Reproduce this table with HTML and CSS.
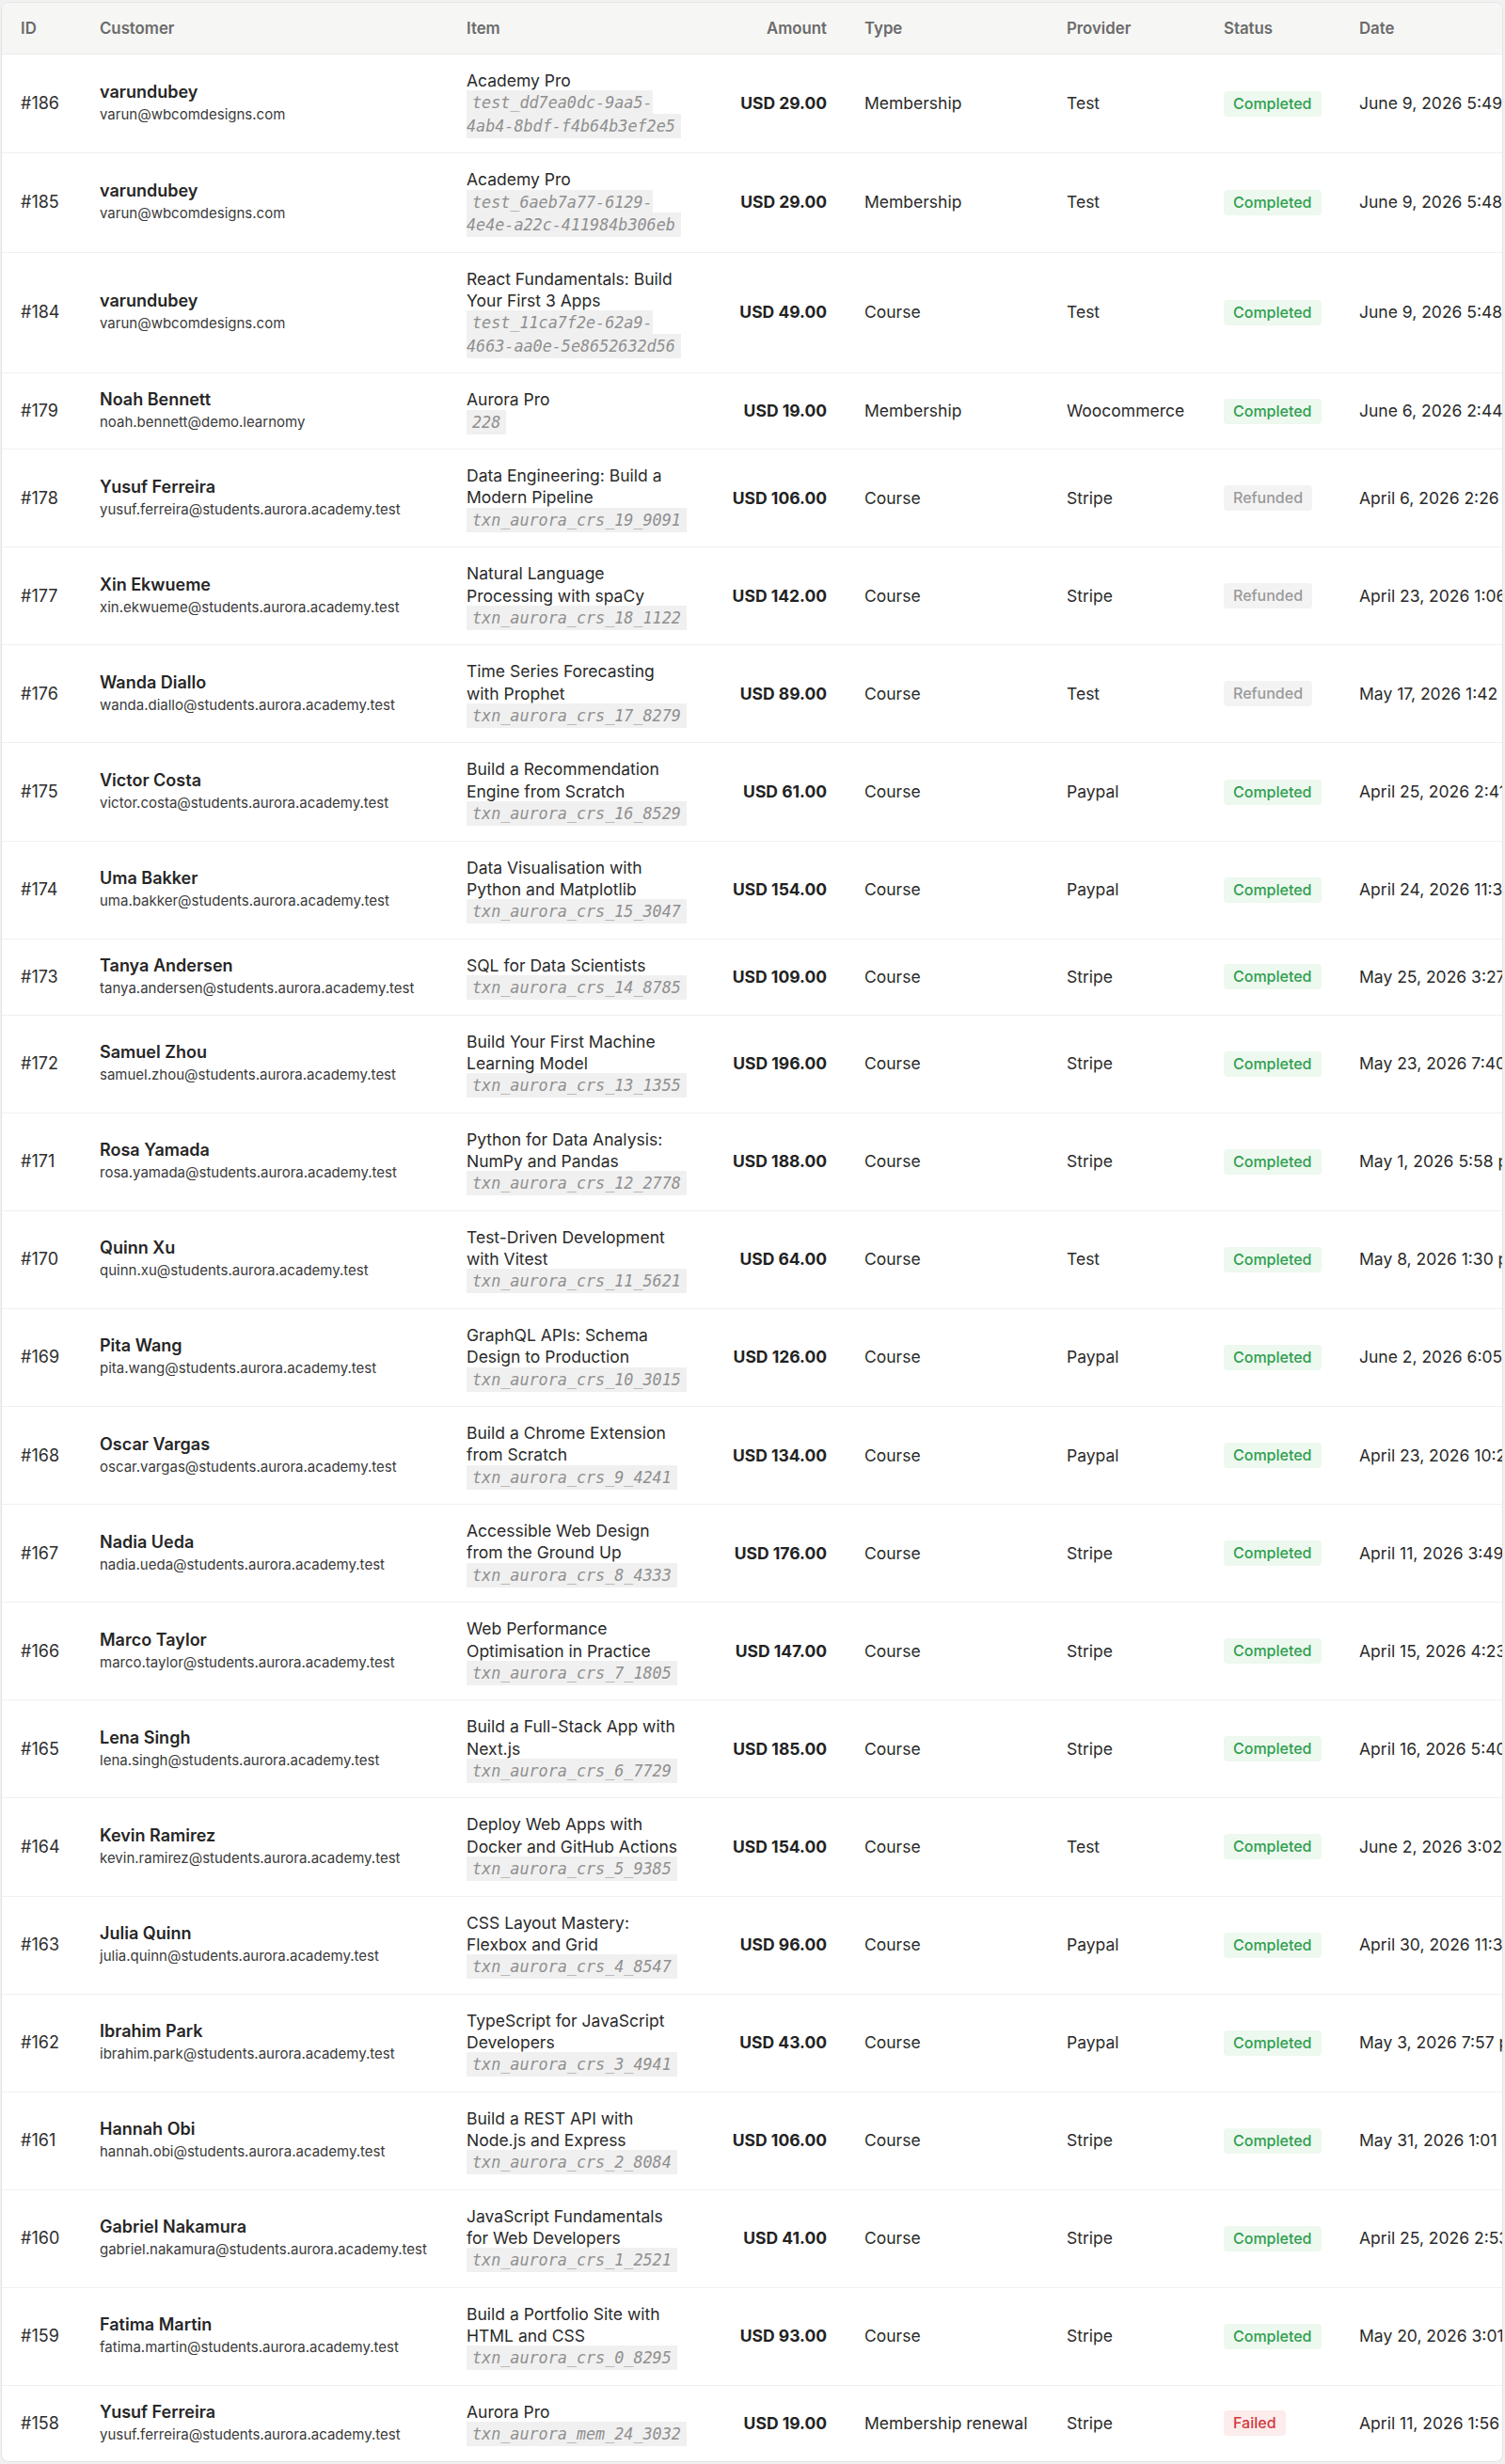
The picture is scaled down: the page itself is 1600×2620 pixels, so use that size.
FILE: index.html
```html
<!DOCTYPE html>
<html lang="en">
<head>
<meta charset="utf-8">
<title>Transactions</title>
<link rel="stylesheet" href="styles.css">
</head>
<body>
<div class="table-wrap">
<table class="tx">
<colgroup>
<col class="c-id"><col class="c-cust"><col class="c-item"><col class="c-amt"><col class="c-type"><col class="c-prov"><col class="c-status"><col class="c-date">
</colgroup>
<thead>
<tr><th>ID</th><th>Customer</th><th>Item</th><th class="num">Amount</th><th>Type</th><th>Provider</th><th>Status</th><th>Date</th></tr>
</thead>
<tbody>
<tr><td class="id">#186</td><td><div class="name">varundubey</div><div class="email">varun@wbcomdesigns.com</div></td><td><div class="item"><div class="title">Academy Pro</div><div class="ref"><code>test_dd7ea0dc-9aa5-4ab4-8bdf-f4b64b3ef2e5</code></div></div></td><td class="num amt">USD 29.00</td><td>Membership</td><td>Test</td><td><span class="badge ok">Completed</span></td><td class="date">June 9, 2026 5:49 pm</td></tr>
<tr><td class="id">#185</td><td><div class="name">varundubey</div><div class="email">varun@wbcomdesigns.com</div></td><td><div class="item"><div class="title">Academy Pro</div><div class="ref"><code>test_6aeb7a77-6129-4e4e-a22c-411984b306eb</code></div></div></td><td class="num amt">USD 29.00</td><td>Membership</td><td>Test</td><td><span class="badge ok">Completed</span></td><td class="date">June 9, 2026 5:48 pm</td></tr>
<tr><td class="id">#184</td><td><div class="name">varundubey</div><div class="email">varun@wbcomdesigns.com</div></td><td><div class="item"><div class="title">React Fundamentals: Build Your First 3 Apps</div><div class="ref"><code>test_11ca7f2e-62a9-4663-aa0e-5e8652632d56</code></div></div></td><td class="num amt">USD 49.00</td><td>Course</td><td>Test</td><td><span class="badge ok">Completed</span></td><td class="date">June 9, 2026 5:48 pm</td></tr>
<tr><td class="id">#179</td><td><div class="name">Noah Bennett</div><div class="email">noah.bennett@demo.learnomy</div></td><td><div class="item"><div class="title">Aurora Pro</div><div class="ref"><code>228</code></div></div></td><td class="num amt">USD 19.00</td><td>Membership</td><td>Woocommerce</td><td><span class="badge ok">Completed</span></td><td class="date">June 6, 2026 2:44 pm</td></tr>
<tr><td class="id">#178</td><td><div class="name">Yusuf Ferreira</div><div class="email">yusuf.ferreira@students.aurora.academy.test</div></td><td><div class="item"><div class="title">Data Engineering: Build a Modern Pipeline</div><div class="ref"><code>txn_aurora_crs_19_9091</code></div></div></td><td class="num amt">USD 106.00</td><td>Course</td><td>Stripe</td><td><span class="badge muted">Refunded</span></td><td class="date">April 6, 2026 2:26 pm</td></tr>
<tr><td class="id">#177</td><td><div class="name">Xin Ekwueme</div><div class="email">xin.ekwueme@students.aurora.academy.test</div></td><td><div class="item"><div class="title">Natural Language Processing with spaCy</div><div class="ref"><code>txn_aurora_crs_18_1122</code></div></div></td><td class="num amt">USD 142.00</td><td>Course</td><td>Stripe</td><td><span class="badge muted">Refunded</span></td><td class="date">April 23, 2026 1:06 pm</td></tr>
<tr><td class="id">#176</td><td><div class="name">Wanda Diallo</div><div class="email">wanda.diallo@students.aurora.academy.test</div></td><td><div class="item"><div class="title">Time Series Forecasting with Prophet</div><div class="ref"><code>txn_aurora_crs_17_8279</code></div></div></td><td class="num amt">USD 89.00</td><td>Course</td><td>Test</td><td><span class="badge muted">Refunded</span></td><td class="date">May 17, 2026 1:42 pm</td></tr>
<tr><td class="id">#175</td><td><div class="name">Victor Costa</div><div class="email">victor.costa@students.aurora.academy.test</div></td><td><div class="item"><div class="title">Build a Recommendation Engine from Scratch</div><div class="ref"><code>txn_aurora_crs_16_8529</code></div></div></td><td class="num amt">USD 61.00</td><td>Course</td><td>Paypal</td><td><span class="badge ok">Completed</span></td><td class="date">April 25, 2026 2:41 pm</td></tr>
<tr><td class="id">#174</td><td><div class="name">Uma Bakker</div><div class="email">uma.bakker@students.aurora.academy.test</div></td><td><div class="item"><div class="title">Data Visualisation with Python and Matplotlib</div><div class="ref"><code>txn_aurora_crs_15_3047</code></div></div></td><td class="num amt">USD 154.00</td><td>Course</td><td>Paypal</td><td><span class="badge ok">Completed</span></td><td class="date">April 24, 2026 11:32 am</td></tr>
<tr><td class="id">#173</td><td><div class="name">Tanya Andersen</div><div class="email">tanya.andersen@students.aurora.academy.test</div></td><td><div class="item"><div class="title">SQL for Data Scientists</div><div class="ref"><code>txn_aurora_crs_14_8785</code></div></div></td><td class="num amt">USD 109.00</td><td>Course</td><td>Stripe</td><td><span class="badge ok">Completed</span></td><td class="date">May 25, 2026 3:27 pm</td></tr>
<tr><td class="id">#172</td><td><div class="name">Samuel Zhou</div><div class="email">samuel.zhou@students.aurora.academy.test</div></td><td><div class="item"><div class="title">Build Your First Machine Learning Model</div><div class="ref"><code>txn_aurora_crs_13_1355</code></div></div></td><td class="num amt">USD 196.00</td><td>Course</td><td>Stripe</td><td><span class="badge ok">Completed</span></td><td class="date">May 23, 2026 7:40 pm</td></tr>
<tr><td class="id">#171</td><td><div class="name">Rosa Yamada</div><div class="email">rosa.yamada@students.aurora.academy.test</div></td><td><div class="item"><div class="title">Python for Data Analysis: NumPy and Pandas</div><div class="ref"><code>txn_aurora_crs_12_2778</code></div></div></td><td class="num amt">USD 188.00</td><td>Course</td><td>Stripe</td><td><span class="badge ok">Completed</span></td><td class="date">May 1, 2026 5:58 pm</td></tr>
<tr><td class="id">#170</td><td><div class="name">Quinn Xu</div><div class="email">quinn.xu@students.aurora.academy.test</div></td><td><div class="item"><div class="title">Test-Driven Development with Vitest</div><div class="ref"><code>txn_aurora_crs_11_5621</code></div></div></td><td class="num amt">USD 64.00</td><td>Course</td><td>Test</td><td><span class="badge ok">Completed</span></td><td class="date">May 8, 2026 1:30 pm</td></tr>
<tr><td class="id">#169</td><td><div class="name">Pita Wang</div><div class="email">pita.wang@students.aurora.academy.test</div></td><td><div class="item"><div class="title">GraphQL APIs: Schema Design to Production</div><div class="ref"><code>txn_aurora_crs_10_3015</code></div></div></td><td class="num amt">USD 126.00</td><td>Course</td><td>Paypal</td><td><span class="badge ok">Completed</span></td><td class="date">June 2, 2026 6:05 pm</td></tr>
<tr><td class="id">#168</td><td><div class="name">Oscar Vargas</div><div class="email">oscar.vargas@students.aurora.academy.test</div></td><td><div class="item"><div class="title">Build a Chrome Extension from Scratch</div><div class="ref"><code>txn_aurora_crs_9_4241</code></div></div></td><td class="num amt">USD 134.00</td><td>Course</td><td>Paypal</td><td><span class="badge ok">Completed</span></td><td class="date">April 23, 2026 10:21 am</td></tr>
<tr><td class="id">#167</td><td><div class="name">Nadia Ueda</div><div class="email">nadia.ueda@students.aurora.academy.test</div></td><td><div class="item"><div class="title">Accessible Web Design from the Ground Up</div><div class="ref"><code>txn_aurora_crs_8_4333</code></div></div></td><td class="num amt">USD 176.00</td><td>Course</td><td>Stripe</td><td><span class="badge ok">Completed</span></td><td class="date">April 11, 2026 3:49 pm</td></tr>
<tr><td class="id">#166</td><td><div class="name">Marco Taylor</div><div class="email">marco.taylor@students.aurora.academy.test</div></td><td><div class="item"><div class="title">Web Performance Optimisation in Practice</div><div class="ref"><code>txn_aurora_crs_7_1805</code></div></div></td><td class="num amt">USD 147.00</td><td>Course</td><td>Stripe</td><td><span class="badge ok">Completed</span></td><td class="date">April 15, 2026 4:23 pm</td></tr>
<tr><td class="id">#165</td><td><div class="name">Lena Singh</div><div class="email">lena.singh@students.aurora.academy.test</div></td><td><div class="item"><div class="title">Build a Full-Stack App with Next.js</div><div class="ref"><code>txn_aurora_crs_6_7729</code></div></div></td><td class="num amt">USD 185.00</td><td>Course</td><td>Stripe</td><td><span class="badge ok">Completed</span></td><td class="date">April 16, 2026 5:40 pm</td></tr>
<tr><td class="id">#164</td><td><div class="name">Kevin Ramirez</div><div class="email">kevin.ramirez@students.aurora.academy.test</div></td><td><div class="item"><div class="title">Deploy Web Apps with Docker and GitHub Actions</div><div class="ref"><code>txn_aurora_crs_5_9385</code></div></div></td><td class="num amt">USD 154.00</td><td>Course</td><td>Test</td><td><span class="badge ok">Completed</span></td><td class="date">June 2, 2026 3:02 pm</td></tr>
<tr><td class="id">#163</td><td><div class="name">Julia Quinn</div><div class="email">julia.quinn@students.aurora.academy.test</div></td><td><div class="item"><div class="title">CSS Layout Mastery: Flexbox and Grid</div><div class="ref"><code>txn_aurora_crs_4_8547</code></div></div></td><td class="num amt">USD 96.00</td><td>Course</td><td>Paypal</td><td><span class="badge ok">Completed</span></td><td class="date">April 30, 2026 11:35 am</td></tr>
<tr><td class="id">#162</td><td><div class="name">Ibrahim Park</div><div class="email">ibrahim.park@students.aurora.academy.test</div></td><td><div class="item"><div class="title">TypeScript for JavaScript Developers</div><div class="ref"><code>txn_aurora_crs_3_4941</code></div></div></td><td class="num amt">USD 43.00</td><td>Course</td><td>Paypal</td><td><span class="badge ok">Completed</span></td><td class="date">May 3, 2026 7:57 pm</td></tr>
<tr><td class="id">#161</td><td><div class="name">Hannah Obi</div><div class="email">hannah.obi@students.aurora.academy.test</div></td><td><div class="item"><div class="title">Build a REST API with Node.js and Express</div><div class="ref"><code>txn_aurora_crs_2_8084</code></div></div></td><td class="num amt">USD 106.00</td><td>Course</td><td>Stripe</td><td><span class="badge ok">Completed</span></td><td class="date">May 31, 2026 1:01 pm</td></tr>
<tr><td class="id">#160</td><td><div class="name">Gabriel Nakamura</div><div class="email">gabriel.nakamura@students.aurora.academy.test</div></td><td><div class="item"><div class="title">JavaScript Fundamentals for Web Developers</div><div class="ref"><code>txn_aurora_crs_1_2521</code></div></div></td><td class="num amt">USD 41.00</td><td>Course</td><td>Stripe</td><td><span class="badge ok">Completed</span></td><td class="date">April 25, 2026 2:53 pm</td></tr>
<tr><td class="id">#159</td><td><div class="name">Fatima Martin</div><div class="email">fatima.martin@students.aurora.academy.test</div></td><td><div class="item"><div class="title">Build a Portfolio Site with HTML and CSS</div><div class="ref"><code>txn_aurora_crs_0_8295</code></div></div></td><td class="num amt">USD 93.00</td><td>Course</td><td>Stripe</td><td><span class="badge ok">Completed</span></td><td class="date">May 20, 2026 3:01 pm</td></tr>
<tr><td class="id">#158</td><td><div class="name">Yusuf Ferreira</div><div class="email">yusuf.ferreira@students.aurora.academy.test</div></td><td><div class="item"><div class="title">Aurora Pro</div><div class="ref"><code>txn_aurora_mem_24_3032</code></div></div></td><td class="num amt">USD 19.00</td><td>Membership renewal</td><td>Stripe</td><td><span class="badge bad">Failed</span></td><td class="date">April 11, 2026 1:56 pm</td></tr>
</tbody>
</table>
</div>
</body>
</html>
```
FILE: styles.css
```css
html, body {
  margin: 0;
  padding: 0;
}
body {
  background: #f1f1f1;
  font-family: Inter, "Liberation Sans", Arial, sans-serif;
  color: #2a2a2a;
  padding: 2px 2px 1px 1px;
}
.table-wrap {
  background: #fff;
  border: 1px solid #e4e4e4;
  border-radius: 8px;
  overflow: hidden;
}
.tx {
  border-collapse: collapse;
  table-layout: fixed;
  width: 1643px;
  font-size: 17.5px;
  line-height: 24px;
}
.c-id { width: 84px; }
.c-cust { width: 390px; }
.c-item { width: 280px; }
.c-amt { width: 143px; }
.c-type { width: 215px; }
.c-prov { width: 167px; }
.c-status { width: 144px; }
.c-date { width: 220px; }

.tx th {
  background: #f6f6f5;
  color: #6b6b6b;
  font-weight: 600;
  font-size: 16.8px;
  line-height: 22px;
  text-align: left;
  padding: 16px 20px;
  border-bottom: 1px solid #ececec;
  white-space: nowrap;
}
.tx td {
  padding: 16px 20px;
  vertical-align: middle;
  border-bottom: 1px solid #f0f0f0;
  white-space: nowrap;
}
.tx tbody tr:last-child td {
  border-bottom: none;
}
.tx .num {
  text-align: right;
}
.id {
  font-size: 18px;
  color: #2e2e2e;
}
.name {
  font-weight: 600;
  font-size: 18px;
  color: #262626;
}
.email {
  font-size: 15px;
  color: #3a3a3a;
}
.item {
  white-space: normal;
  max-width: 232px;
}
.title {
  line-height: 23.3px;
  color: #2a2a2a;
}
.ref {
  font-family: "DejaVu Sans Mono", "Liberation Mono", monospace;
  font-size: 16.75px;
  line-height: 24.5px;
}
.ref code {
  font-family: inherit;
  font-style: italic;
  color: #8f8f8f;
  background: #f0f0f0;
  padding: 3px 6px;
}
.amt {
  font-weight: 700;
  color: #222;
}
.badge {
  display: inline-block;
  font-size: 16px;
  font-weight: 500;
  line-height: 21px;
  padding: 3px 10px;
  border-radius: 4px;
}
.badge.ok {
  color: #2f9e4f;
  background: #edf8ef;
}
.badge.muted {
  color: #9a9a9a;
  background: #f3f3f3;
}
.badge.bad {
  color: #d1383c;
  background: #fdecec;
}
.date {
  color: #2a2a2a;
}
```
